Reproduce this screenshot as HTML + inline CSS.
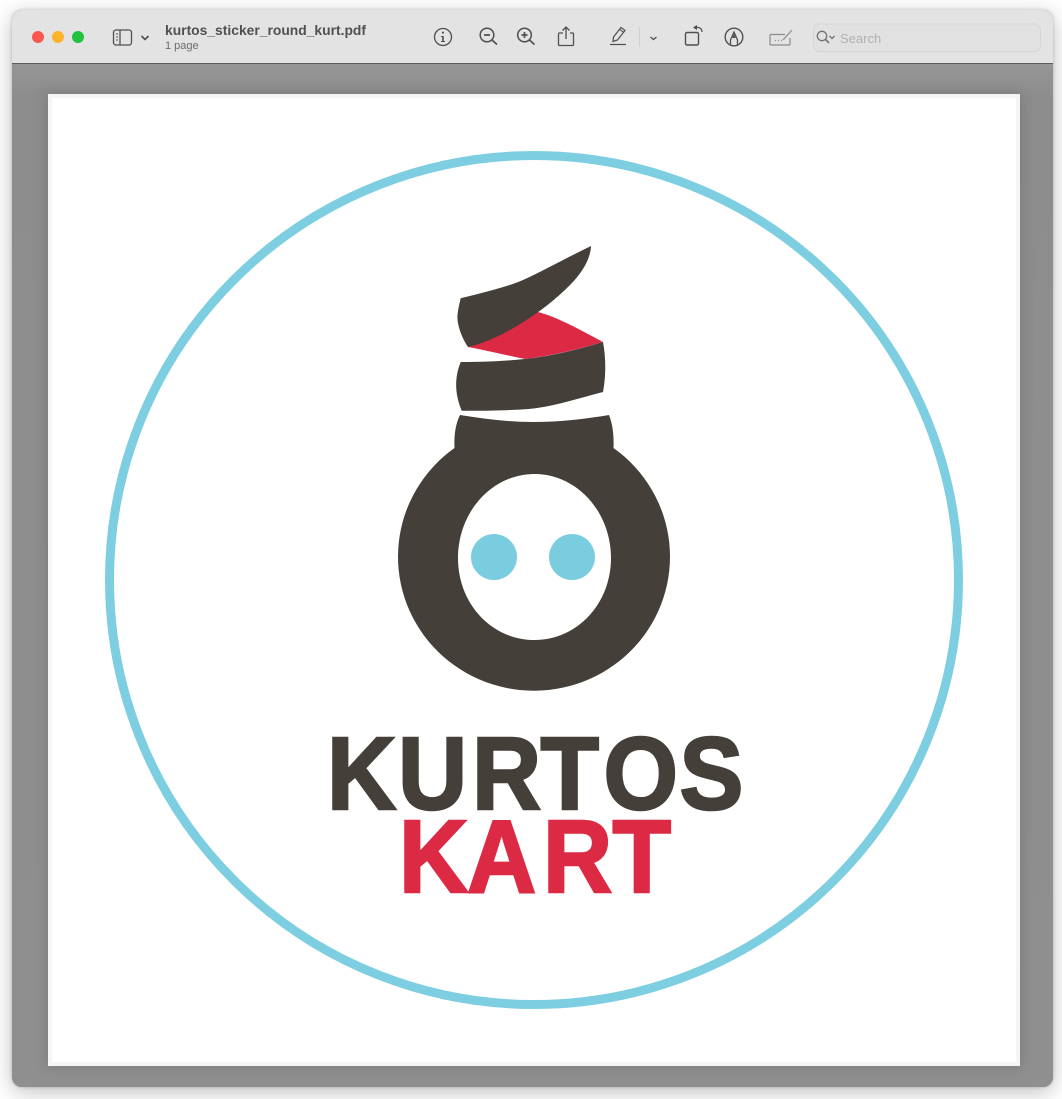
<!DOCTYPE html>
<html lang="en"><head><meta charset="utf-8"><title>kurtos_sticker_round_kurt.pdf</title>
<style>
html,body{margin:0;padding:0;background:#fff;width:1062px;height:1099px;overflow:hidden}
body{position:relative;font-family:"Liberation Sans",sans-serif}
.win{position:absolute;left:12px;top:10px;width:1041px;height:1077px;border-radius:10px;overflow:hidden;background:#8f8f8f;box-shadow:0 5px 22px rgba(0,0,0,.25),0 0 3px rgba(0,0,0,.2)}
.bar{position:absolute;left:0;top:0;width:100%;height:53px;background:#e3e3e3;border-bottom:1px solid #5c5c5c;box-sizing:content-box}
.body{position:absolute;left:0;top:54px;width:100%;bottom:0;background:linear-gradient(#969696,#8d8d8d 30px,#8f8f8f)}
.page{position:absolute;left:48px;top:94px;width:972px;height:972px;background:#fff;box-shadow:0 0 14px rgba(0,0,0,.16)}
svg{position:absolute;left:0;top:0}
</style></head><body>
<div class="win"><div class="bar"></div><div class="body"></div></div>
<div class="page"></div>
<svg width="1062" height="1099" viewBox="0 0 1062 1099">
<rect x="50" y="96" width="968" height="968" fill="none" stroke="#f5f5f5" stroke-width="4"/>
<circle cx="38" cy="37" r="6" fill="#fb5650"/><circle cx="58" cy="37" r="6" fill="#fdb42a"/><circle cx="78" cy="37" r="6" fill="#21c23e"/>
<g fill="none" stroke="#505050" stroke-width="1.3">
<rect x="113.500" y="30" width="18" height="15" rx="2.500"/><path d="M120 30V45"/>
<path d="M116 34h2M116 37h2M116 40h2" stroke-width="1"/>
<path d="M141.500 36l3.500 3.500 3.500-3.500" stroke-width="1.600"/>
<circle cx="443" cy="37" r="8.500"/>
<circle cx="487" cy="35" r="6.800" stroke-width="1.500"/><path d="M484 35h6M492 40l5 4.500" stroke-width="1.700"/>
<circle cx="524.500" cy="35" r="6.800" stroke-width="1.500"/><path d="M521.500 35h6M524.500 32v6M529.500 40l5 4.500" stroke-width="1.700"/>
<path d="M563 33h-3.500a1 1 0 0 0-1 1v10.500a1 1 0 0 0 1 1h13a1 1 0 0 0 1-1V34a1 1 0 0 0-1-1H570M566 39V27.500M562.500 30.500l3.500-3.500 3.500 3.500"/>
<path d="M613 41.500L613.500 37L621 27.500L625 30.500L617.500 40Z" stroke-width="1.200"/>
<path d="M619.500 29.300L623.500 32.300" stroke-width="1"/>
<path d="M610 44.500h16" stroke-width="1.200"/>
<path d="M650.500 37l3 2.500 3-2.500" stroke-width="1.300"/>
<rect x="685.500" y="32.500" width="13" height="12.500" rx="1.500" stroke-width="1.400"/>
<path d="M696 27.500c3.500-.5 6 1 6 4.500" stroke-width="1.200"/>
<circle cx="734" cy="37" r="8.800" stroke-width="1.400"/>
<path d="M730.500 45V40L734 32L737.500 40V45" stroke-width="1.300"/>
</g>
<path d="M442 33.500h2v-1.700h-2zM441 36h2.800v5h1.200v1h-4v-1h1.200v-4H441z" fill="#505050"/>
<path d="M693 27.500l4-2.500v5z" fill="#505050"/>
<path d="M732.300 38L734 33.500L735.700 38z" fill="#505050"/>
<path d="M639.500 27v20" stroke="#cfcfcf" stroke-width="1"/>
<g fill="none" stroke="#8b8b8b" stroke-width="1.200">
<path d="M785 34.500h-14a1 1 0 0 0-1 1v8.500a1 1 0 0 0 1 1h18a1 1 0 0 0 1-1V38"/>
<path d="M783 40l9-10"/><path d="M775 40.500h1M778 40.500h1M781 40.500h1" stroke-width="1.300"/>
</g>
<rect x="813.500" y="24" width="227" height="27.500" rx="6" fill="#e1e1e1" stroke="#d6d6d6"/>
<g fill="none" stroke="#707070">
<circle cx="822" cy="36" r="4.700" stroke-width="1.300"/><path d="M825.500 39.500l3.500 3.500" stroke-width="1.600"/>
<path d="M829.500 36l2.500 2.500 2.500-2.500" stroke-width="1.300"/>
</g>
<text x="840" y="43" font-family="Liberation Sans" font-size="13" fill="#b1b1b1">Search</text>
<text x="165" y="35" font-family="Liberation Sans" font-weight="700" font-size="13.500" fill="#505050" textLength="201" lengthAdjust="spacingAndGlyphs">kurtos_sticker_round_kurt.pdf</text>
<text x="165" y="49" font-family="Liberation Sans" font-size="11" fill="#6b6b6b">1 page</text>

<circle cx="534" cy="580" r="424.500" fill="none" stroke="#7dcee1" stroke-width="9"/>
<path fill="#dc2a45" d="M468 347L530 305L538 312C560 318 582 331 603 342C580 349 550 356 525 359C505 355 485 350 468 347Z"/>
<path fill="#443f39" d="M460.700 298.300C485 292 507 287 523 280C545 270 570 256 591 246C590.500 259 582 273 570 285C562 293 554 300 545 307C525 322 497 340 468 347C463 340 456.500 325 457.500 315C458 309 459.500 304 460.700 298.300Z"/>
<path fill="#443f39" d="M460.700 362C485 362 505 361 525 359C552 356 580 349 603 342C606 358 606 376 603 392C580 398 558 405 537 408C525 410 490 411 461.700 410.700C455 395 454 378 460.700 362Z"/>
<path fill="#443f39" fill-rule="evenodd" d="M454.500 448A136 134 0 1 0 613.500 448C614 437 613 425 609 415C585 419 560 422 533 422C508 422 485 419 460 415C455 425 454 437 454.500 448ZM534.500 474C577 474 611 512 611 558C611 604 577 640 534.500 640C492 640 458 604 458 558C458 512 492 474 534.500 474Z"/>
<circle cx="494" cy="557" r="23" fill="#7accdf"/><circle cx="572" cy="557" r="23" fill="#7accdf"/>
<text transform="scale(.93 1)" x="351.600 428 507.500 581.200 649 730.600" y="809" font-family="Liberation Sans" font-weight="700" font-size="103" fill="#443f39" stroke="#443f39" stroke-width="2.500">KURTOS</text>
<text transform="scale(.93 1)" x="429 502.200 583.900 658.600" y="892" font-family="Liberation Sans" font-weight="700" font-size="103" fill="#dc2a45" stroke="#dc2a45" stroke-width="2.500">KART</text>
</svg>
</body></html>
